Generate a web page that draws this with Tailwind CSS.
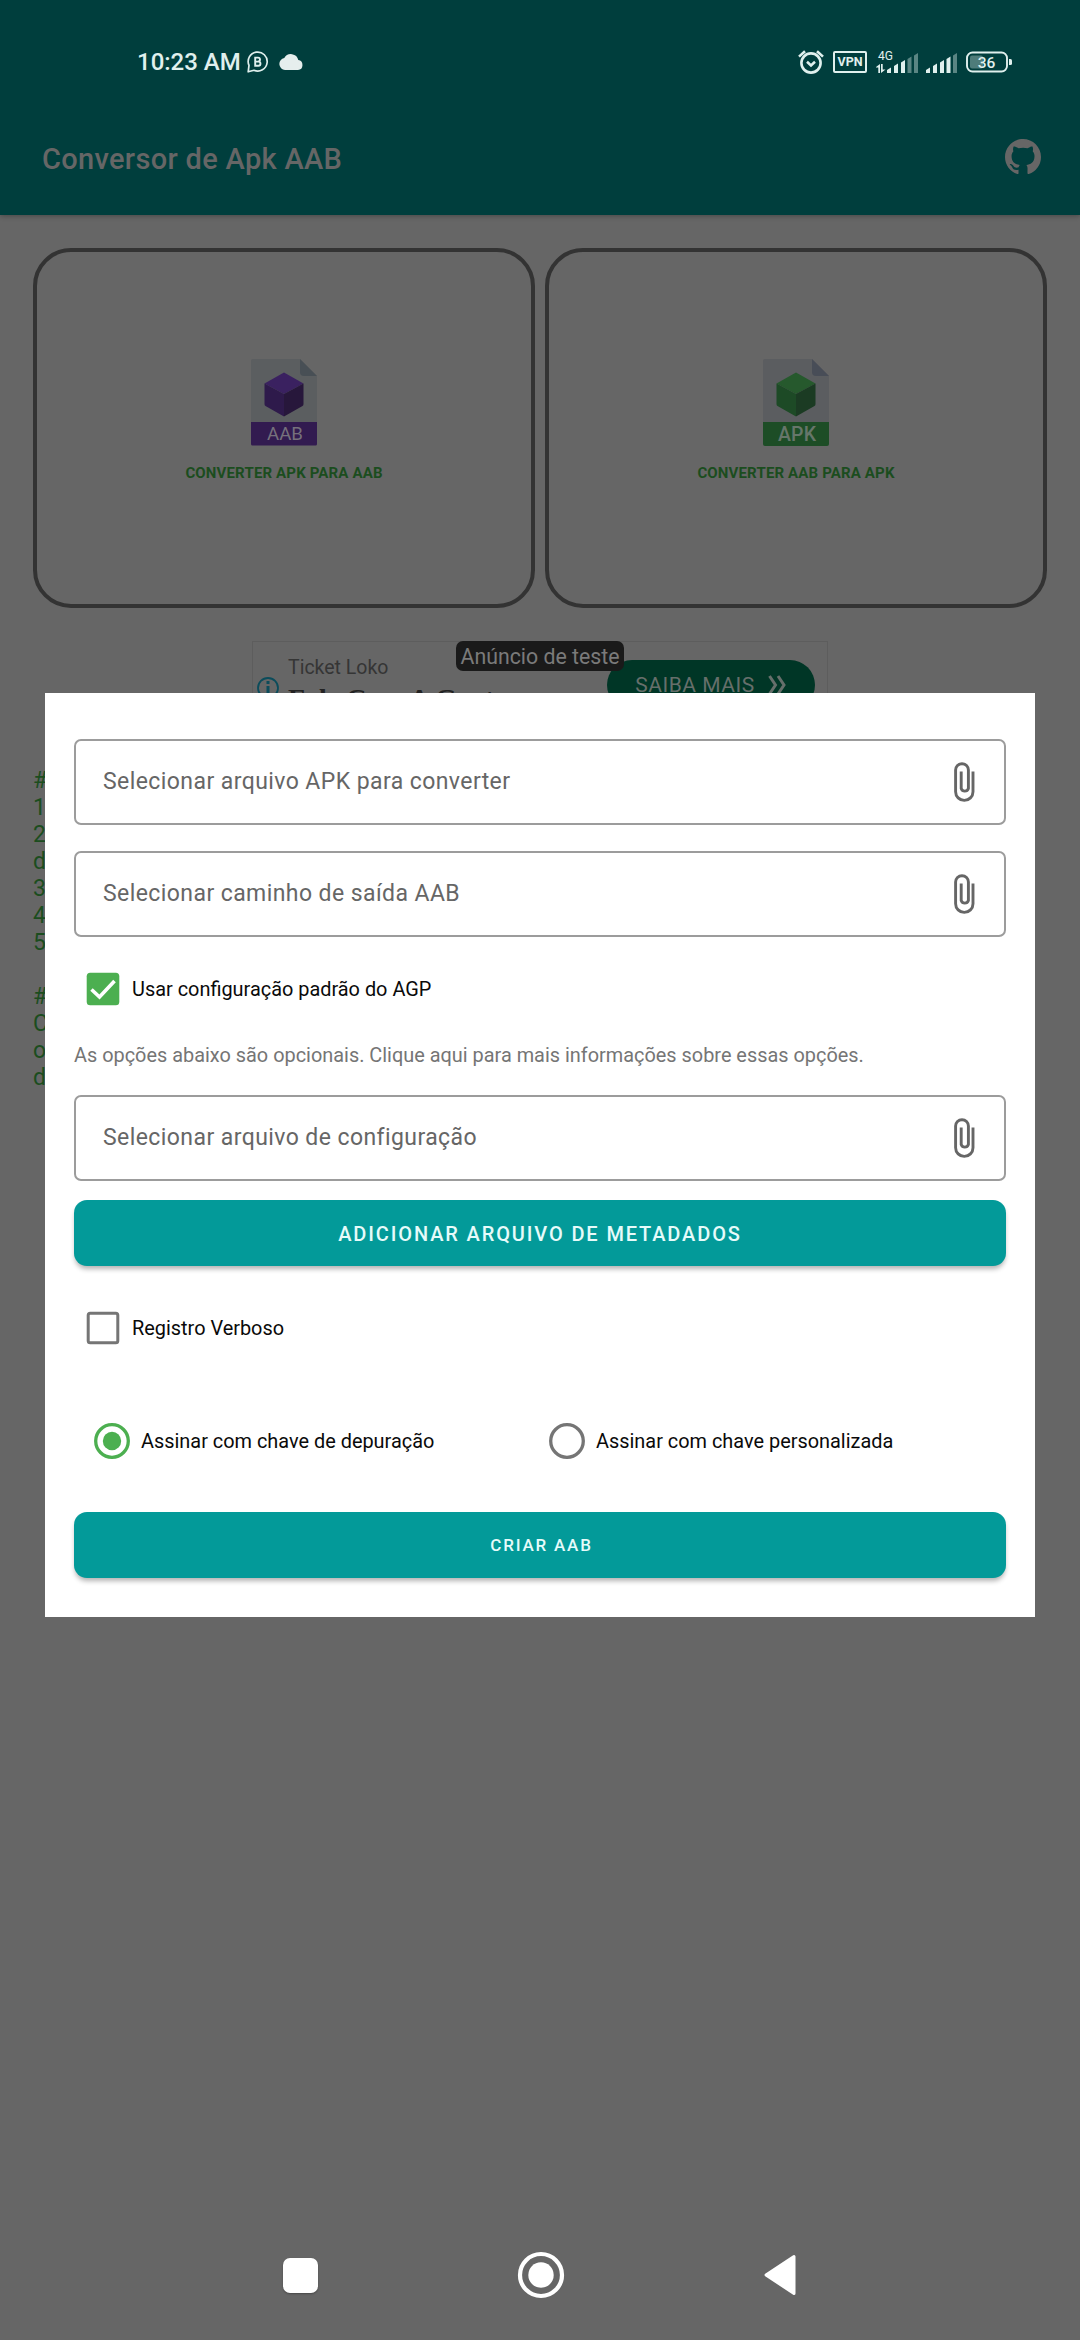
<!DOCTYPE html>
<html lang="pt-BR">
<head>
<meta charset="utf-8">
<title>Conversor de Apk AAB</title>
<script src="https://cdn.jsdelivr.net/npm/@tailwindcss/browser@4"></script>
</head>
<body class="bg-[#666666]">
<div class="relative flex h-[2340px] w-[1080px] flex-col overflow-hidden bg-[#666666] font-['Roboto',sans-serif] whitespace-nowrap">

  <header class="relative flex h-[215px] flex-col bg-[#003e3d] shadow-[0_1px_5px_rgba(0,0,0,0.3)]">
    <div class="flex h-[124px] items-center justify-between pr-[68px] pl-[137px] text-[#e0f0ee]">
      <div class="flex items-center">
        <span class="w-[110px] text-[24px] leading-[30px] font-medium">10:23 AM</span>
        <svg class="h-[22px] w-[22px]" viewBox="0 0 22 22" fill="none" stroke="currentColor" stroke-width="1.7"><path d="M1.200 20.800 2 14.400A9.500 9.500 0 1 1 7 19.300z" stroke-linejoin="round"/><path d="M8.200 6.600h2.800a2 2 0 0 1 0 4H8.200zM8.200 10.600h3.200a2 2 0 0 1 0 4.100H8.200z" stroke-width="1.900"/></svg>
        <svg class="ml-[10px] h-[16px] w-[24px]" viewBox="0 0 24 16" fill="#e6eeed"><path d="M19.300 6.100A7.500 7.500 0 0 0 5.300 4.100 6 6 0 0 0 6 16h13a5 5 0 0 0 .3-9.900z"/></svg>
      </div>
      <div class="flex items-center">
        <svg class="h-[26px] w-[26px]" viewBox="0 0 26 26" fill="none" stroke="currentColor" stroke-width="2.600"><circle cx="13" cy="14" r="9.600"/><path d="M1 7.600 7 2.200M25 7.600 19 2.200M9 12.800l4 3.600 4-3.600"/></svg>
        <div class="ml-[9px] flex h-[22px] w-[34px] items-center justify-center rounded-[2px] border-2 border-current"><span class="text-[12.5px] leading-none font-bold">VPN</span></div>
        <svg class="ml-[9px] h-[26px] w-[42px] overflow-visible" viewBox="0 0 42 26" fill="currentColor"><text x="2" y="11" font-family="Roboto" font-size="13.500" textLength="15" lengthAdjust="spacingAndGlyphs">4G</text><path d="M0 18l4-3v9H2.300v-5.500H0zM5 15h1.700v5.500H9.500L5 24z"/><path d="M11 24v-3l4-2.500V24zM18 24v-7l4-2.500V24zM25 24V13.500l4-2.500V24z"/><path opacity=".4" d="M31.500 24V10l4-2.500V24zM38 24V6.500L42 4v20z"/></svg>
        <svg class="ml-[8px] h-[26px] w-[31px]" viewBox="0 0 31 26" fill="currentColor"><path d="M0 24v-3l4-2.500V24zM7 24v-7l4-2.500V24zM14 24V13.500l4-2.500V24zM20.500 24V10l4-2.500V24z"/><path opacity=".4" d="M27 24V6.500L31 4v20z"/></svg>
        <svg class="ml-[9px] h-[22px] w-[46px]" viewBox="0 0 46 22"><rect x="1" y="1.500" width="40" height="19" rx="5.500" fill="none" stroke="currentColor" stroke-width="1.900"/><rect x="4" y="4.500" width="13" height="13" rx="2" fill="currentColor" opacity=".35"/><path d="M43 8h1.500q1.500 0 1.500 1.500v3q0 1.500-1.500 1.500H43z" fill="currentColor"/><text x="20.500" y="16.500" text-anchor="middle" font-family="Roboto" font-weight="500" font-size="15.500" fill="currentColor">36</text></svg>
      </div>
    </div>
    <div class="flex h-[70px] items-center justify-between pr-[39px] pl-[42px] text-[#666666]">
      <h1 class="text-[29px] leading-[34px] font-medium tracking-[0.32px]">Conversor de Apk AAB</h1>
      <svg class="mb-[4px] h-[36px] w-[36px]" viewBox="0 0 16 16" fill="currentColor"><path d="M8 0C3.580 0 0 3.580 0 8c0 3.540 2.290 6.530 5.470 7.590.4.070.55-.17.55-.38 0-.19-.01-.82-.01-1.490-2.010.37-2.530-.49-2.690-.94-.09-.23-.48-.94-.82-1.130-.28-.15-.68-.52-.01-.53.63-.01 1.080.58 1.230.82.72 1.210 1.870.87 2.330.66.07-.52.28-.87.51-1.070-1.780-.2-3.640-.89-3.640-3.950 0-.87.31-1.590.82-2.150-.08-.2-.36-1.020.08-2.120 0 0 .67-.21 2.200.82.64-.18 1.320-.27 2-.27s1.360.09 2 .27c1.530-1.040 2.200-.82 2.200-.82.44 1.100.16 1.920.08 2.120.51.56.82 1.270.82 2.150 0 3.070-1.870 3.750-3.650 3.950.29.25.54.73.54 1.480 0 1.070-.01 1.930-.01 2.200 0 .21.15.46.55.38A8.010 8.010 0 0 0 16 8c0-4.420-3.580-8-8-8z"/></svg>
    </div>
  </header>

  <main class="flex flex-1 flex-col">
    <section class="mt-[33px] grid grid-cols-2 gap-[10px] px-[33px]">
      <div class="flex h-[360px] flex-col items-center rounded-[38px] border-4 border-[#333333] pt-[107px]">
        <svg class="h-[87px] w-[66px]" viewBox="0 0 66 87"><path d="M2 0h47l17 17v50H0V2q0-2 2-2z" fill="#5b5e60"/><path d="M49 0l17 17H53q-4 0-4-4z" fill="#484f55"/><path d="M0 63h66v22q0 1.500-1.500 1.500h-63Q0 86.500 0 85z" fill="#321b50"/><path d="M33 13.500l19.500 11L33 35 13.500 24.500z" fill="#3a2160"/><path d="M13.500 24.500 33 35v22.500L14.500 47q-1-.5-1-2z" fill="#2e1a4b"/><path d="M52.500 24.500 33 35v22.500L51.500 47q1-.5 1-2z" fill="#27173b"/><text x="16" y="80.500" textLength="36" lengthAdjust="spacingAndGlyphs" font-family="Roboto" font-size="18.500" fill="#76717c">AAB</text></svg>
        <span class="mt-[18px] text-[15px] leading-[18px] font-bold tracking-[0.15px] text-[#1b4d1e]">CONVERTER APK PARA AAB</span>
      </div>
      <div class="flex h-[360px] flex-col items-center rounded-[38px] border-4 border-[#333333] pt-[107px]">
        <svg class="h-[87px] w-[66px]" viewBox="0 0 66 87"><path d="M2 0h47l17 17v50H0V2q0-2 2-2z" fill="#5b5d60"/><path d="M49 0l17 17H53q-4 0-4-4z" fill="#484d57"/><path d="M0 63h66v22q0 2-2 2H2q-2 0-2-2z" fill="#1d4d26"/><path d="M33 13.500l19.500 11L33 35 13.500 24.500z" fill="#26592d"/><path d="M13.500 24.500 33 35v22.500L14.500 47q-1-.5-1-2z" fill="#1d4a26"/><path d="M52.500 24.500 33 35v22.500L51.500 47q1-.5 1-2z" fill="#1b3b23"/><text x="15" y="82" textLength="38" lengthAdjust="spacing" font-family="Roboto" font-weight="500" font-size="19.500" fill="#66766a">APK</text></svg>
        <span class="mt-[18px] text-[15px] leading-[18px] font-bold tracking-[0.15px] text-[#1b4d1e]">CONVERTER AAB PARA APK</span>
      </div>
    </section>

    <section class="relative mt-[33px] ml-[252px] flex h-[90px] w-[576px] justify-between border border-[#5d5d5d] text-[#333333]">
      <div class="flex pt-[14px] pl-[3px]">
        <svg class="mt-[20px] h-[24px] w-[24px]" viewBox="0 0 24 24" fill="none" stroke="#0b4c5b"><circle cx="12" cy="12" r="10" stroke-width="1.800"/><path d="M12 10v9M12 5v3" stroke-width="3"/></svg>
        <div class="ml-[8px] flex flex-col">
          <span class="text-[19.5px] leading-[24px] text-[#353535]">Ticket Loko</span>
          <span class="mt-[2px] font-['Liberation_Serif',serif] text-[28px] leading-[34px] font-bold text-[#222222]">Fale Com A Gente</span>
        </div>
      </div>
      <div class="mt-[18px] mr-[12px] flex h-[50px] w-[208px] items-center justify-center gap-[13px] rounded-full bg-[#003626] text-[#666f6b]">
        <span class="text-[21px] leading-[24px] tracking-[0.5px]">SAIBA MAIS</span>
        <svg class="h-[20px] w-[19px]" viewBox="0 0 19 20" fill="none" stroke="currentColor" stroke-width="3"><path d="M1.500 1l6 9-6 9M10 1l6 9-6 9"/></svg>
      </div>
      <div class="absolute top-[-1px] left-[203px] flex h-[30px] w-[168px] items-center justify-center rounded-[7px] bg-[#1a1a1a] pt-[2px]"><span class="text-[21.3px] leading-[26px] text-[#7a7a7a]">Anúncio de teste</span></div>
    </section>

    <pre class="mt-[36px] ml-[33px] font-['Roboto',sans-serif] text-[23px] leading-[27px] text-[#1b4d1e]">#
1
2
d
3
4
5

#
C
o
d</pre>
  </main>

  <nav class="flex h-[130px] items-center justify-between pr-[284px] pl-[283px]">
    <div class="h-[35px] w-[35px] rounded-[7px] bg-white shadow-[0_1px_2px_rgba(0,0,0,0.3)]"></div>
    <svg class="h-[48px] w-[48px]" viewBox="0 0 48 48"><circle cx="24" cy="24" r="21" fill="none" stroke="#fff" stroke-width="4.200"/><circle cx="24" cy="24" r="12.700" fill="#fff"/></svg>
    <svg class="h-[42px] w-[32px]" viewBox="0 0 32 42"><path d="M2 21 30 2.500v37z" fill="#fff" stroke="#fff" stroke-width="3" stroke-linejoin="round"/></svg>
  </nav>

  <!-- Dialog -->
  <div role="dialog" class="absolute top-[693px] left-[45px] flex h-[924px] w-[990px] flex-col bg-white px-[29px] pt-[46px] text-[19.9px] text-[#0a0a0a]">
    <div class="flex h-[86px] shrink-0 items-center justify-between rounded-[7px] border-2 border-[#9c9c9c] pr-[29px] pl-[27px] text-[#666666]">
      <span class="text-[23px] tracking-[0.42px]">Selecionar arquivo APK para converter</span>
      <svg class="h-[40px] w-[21px]" viewBox="0 0 21 40" fill="none" stroke="currentColor" stroke-width="2.900"><path d="M19 9.500V29.700a8.700 8.700 0 0 1-17.400 0V8.100a6.200 6.200 0 0 1 12.800 0V26.500a3.800 3.800 0 0 1-7.200 0V9.500"/></svg>
    </div>
    <div class="mt-[26px] flex h-[86px] shrink-0 items-center justify-between rounded-[7px] border-2 border-[#9c9c9c] pr-[29px] pl-[27px] text-[#666666]">
      <span class="text-[23px] tracking-[0.42px]">Selecionar caminho de saída AAB</span>
      <svg class="h-[40px] w-[21px]" viewBox="0 0 21 40" fill="none" stroke="currentColor" stroke-width="2.900"><path d="M19 9.500V29.700a8.700 8.700 0 0 1-17.400 0V8.100a6.200 6.200 0 0 1 12.800 0V26.500a3.800 3.800 0 0 1-7.200 0V9.500"/></svg>
    </div>
    <label class="mt-[35px] ml-[12px] flex h-[34px] items-center gap-[12px]">
      <svg class="h-[34px] w-[34px]" viewBox="0 0 34 34"><rect x=".7" y=".7" width="32.600" height="32.600" rx="3.500" fill="#4caf50"/><path d="M5.500 17.500l8 7.500L28.500 9" fill="none" stroke="#fff" stroke-width="3.600"/></svg>
      <span class="pt-[2px]">Usar configuração padrão do AGP</span>
    </label>
    <p class="mt-[34px] h-[32px] leading-[32px] text-[#757575]">As opções abaixo são opcionais. Clique aqui para mais informações sobre essas opções.</p>
    <div class="mt-[23px] flex h-[86px] shrink-0 items-center justify-between rounded-[7px] border-2 border-[#9c9c9c] pr-[29px] pl-[27px] text-[#666666]">
      <span class="text-[23px] tracking-[0.42px]">Selecionar arquivo de configuração</span>
      <svg class="h-[40px] w-[21px]" viewBox="0 0 21 40" fill="none" stroke="currentColor" stroke-width="2.900"><path d="M19 9.500V29.700a8.700 8.700 0 0 1-17.400 0V8.100a6.200 6.200 0 0 1 12.800 0V26.500a3.800 3.800 0 0 1-7.200 0V9.500"/></svg>
    </div>
    <button class="mt-[19px] h-[66px] shrink-0 rounded-[13px] bg-[#039a99] pt-[2px] text-[20px] font-medium tracking-[1.87px] text-[#e6fbfa] shadow-[0_4px_5px_-1px_rgba(0,0,0,0.3)]">ADICIONAR ARQUIVO DE METADADOS</button>
    <label class="mt-[45px] ml-[12px] flex h-[34px] items-center gap-[12px]">
      <svg class="h-[34px] w-[34px]" viewBox="0 0 34 34"><rect x="2.200" y="2.200" width="29.600" height="29.600" rx="2" fill="none" stroke="#757575" stroke-width="3"/></svg>
      <span class="pt-[2px]">Registro Verboso</span>
    </label>
    <div class="mt-[77px] flex h-[38px] items-center pl-[19px]">
      <label class="flex w-[455px] items-center gap-[10px]">
        <svg class="h-[38px] w-[38px]" viewBox="0 0 38 38"><circle cx="19" cy="19" r="16.300" fill="none" stroke="#4caf50" stroke-width="3.300"/><circle cx="19" cy="19" r="9.200" fill="#4caf50"/></svg>
        <span class="pt-[2px]">Assinar com chave de depuração</span>
      </label>
      <label class="flex items-center gap-[10px]">
        <svg class="h-[38px] w-[38px]" viewBox="0 0 38 38"><circle cx="19" cy="19" r="16.300" fill="none" stroke="#757575" stroke-width="3.300"/></svg>
        <span class="pt-[2px]">Assinar com chave personalizada</span>
      </label>
    </div>
    <button class="mt-[52px] h-[66px] shrink-0 rounded-[13px] bg-[#039a99] pt-px pl-[3px] text-[17px] font-medium tracking-[1.8px] text-[#e6fbfa] shadow-[0_4px_5px_-1px_rgba(0,0,0,0.3)]">CRIAR AAB</button>
  </div>
</div>
</body>
</html>
